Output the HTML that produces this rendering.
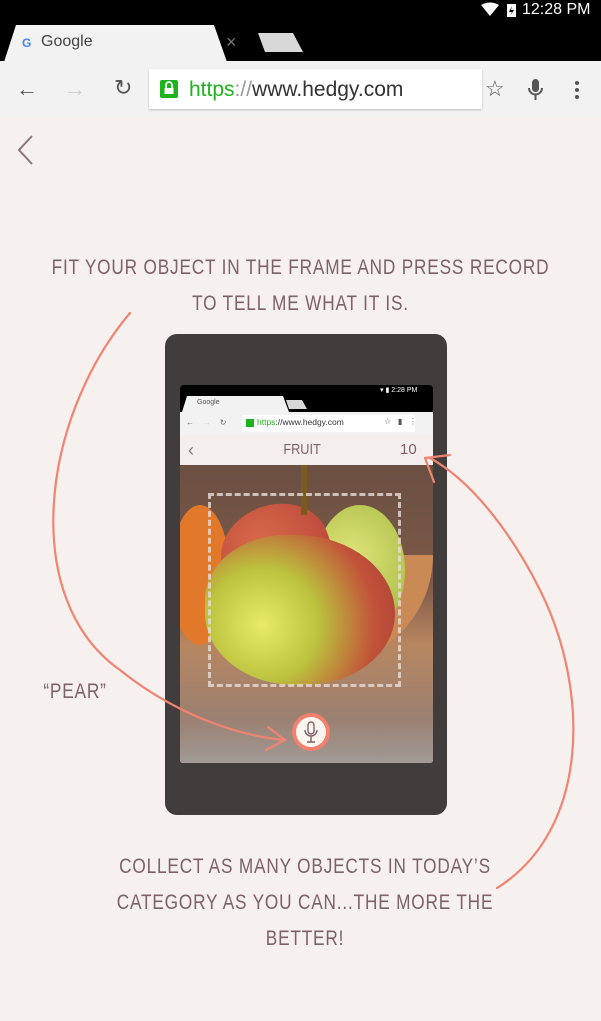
<!DOCTYPE html>
<html><head><meta charset="utf-8"><style>
body{margin:0;width:601px;height:1021px;background:#f6f0ef;font-family:"Liberation Sans",sans-serif;position:relative;overflow:hidden}
.abs{position:absolute}
.hand{font-family:"Liberation Sans",sans-serif;color:#7d6266;letter-spacing:1px;text-align:center;font-size:21px;line-height:36px;transform:scaleX(.82);}
</style></head><body>
<div class="abs" style="left:0;top:0;width:601px;height:62px;background:#000"></div>
<div class="abs" style="left:522px;top:0;color:#fff;font-size:16px;line-height:19px">12:28 PM</div>
<svg class="abs" style="left:480px;top:2px" width="40" height="16"><path d="M1 3 Q10 -2 19 3 L10 14Z" fill="#fff"/><rect x="27" y="2" width="9" height="13" fill="#fff"/><path d="M32 4 L29 10 L32 10 L30 14 L34 8 L31 8Z" fill="#000"/></svg>
<svg class="abs" style="left:0;top:25px" width="310" height="37"><path d="M4 37 L16 0 L214 0 L227 37Z" fill="#f2f2f2"/><path d="M258 8 L293 8 L303 27 L265 27Z" fill="#d8d8d8"/></svg>
<div class="abs" style="left:22px;top:36px;font-size:12px;font-weight:bold;color:#4285f4">G</div>
<div class="abs" style="left:41px;top:33px;font-size:16px;color:#444">Google</div>
<div class="abs" style="left:226px;top:32px;font-size:18px;color:#777">×</div>
<div class="abs" style="left:0;top:61px;width:601px;height:57px;background:#f2f2f2"></div>
<div class="abs" style="left:16px;top:76px;font-size:22px;color:#555">←</div>
<div class="abs" style="left:64px;top:76px;font-size:22px;color:#ccc">→</div>
<div class="abs" style="left:114px;top:75px;font-size:22px;color:#555">↻</div>
<div class="abs" style="left:149px;top:69px;width:333px;height:40px;background:#fff;box-shadow:0 1px 2px #bbb"></div>
<div class="abs" style="left:160px;top:80px;width:18px;height:18px;background:#1db31d;border-radius:2px"></div>
<svg class="abs" style="left:163px;top:81px" width="12" height="15"><path d="M3 7 V4 A3 3 0 0 1 9 4 V7" stroke="#fff" stroke-width="1.8" fill="none"/><rect x="1.5" y="7" width="9" height="6" fill="#fff"/></svg>
<div class="abs" style="left:189px;top:78px;font-size:21px;color:#333"><span style="color:#1db31d">https</span><span style="color:#999">://</span>www.hedgy.com</div>
<div class="abs" style="left:485px;top:76px;font-size:22px;color:#555">☆</div>
<svg class="abs" style="left:527px;top:78px" width="18" height="24"><rect x="5" y="1" width="7" height="13" rx="3.5" fill="#555"/><path d="M2 10 A6.5 6.5 0 0 0 15 10 M8.5 17 V22" stroke="#555" stroke-width="2" fill="none"/></svg>
<svg class="abs" style="left:574px;top:80px" width="6" height="20"><circle cx="3" cy="3" r="2" fill="#555"/><circle cx="3" cy="10" r="2" fill="#555"/><circle cx="3" cy="17" r="2" fill="#555"/></svg>
<svg class="abs" style="left:14px;top:134px" width="24" height="32"><path d="M18 2 L5 16 L18 30" stroke="#8a7579" stroke-width="2" fill="none"/></svg>
<div class="abs hand" style="left:-20px;top:250px;width:641px">FIT YOUR OBJECT IN THE FRAME AND PRESS RECORD<br>TO TELL ME WHAT IT IS.</div>
<div class="abs" style="left:165px;top:334px;width:282px;height:481px;background:#423d3d;border-radius:12px"></div>
<div class="abs" style="left:180px;top:385px;width:253px;height:378px;background:#f4eeed;overflow:hidden;border-radius:3px">
 <div class="abs" style="left:0;top:0;width:253px;height:27px;background:#000"></div>
 <div class="abs" style="left:200px;top:1px;color:#fff;font-size:7px">▾ ▮ 2:28 PM</div>
 <svg class="abs" style="left:0;top:11px" width="140" height="16"><path d="M2 16 L7 0 L103 0 L109 16Z" fill="#f2f2f2"/><path d="M106 4 L122 4 L127 13 L109 13Z" fill="#d8d8d8"/></svg>
 <div class="abs" style="left:17px;top:14px;font-size:7px;color:#555">Google</div>
 <div class="abs" style="left:0;top:27px;width:253px;height:23px;background:#f2f2f2"></div>
 <div class="abs" style="left:6px;top:33px;font-size:8px;color:#666">←&nbsp;&nbsp;&nbsp;&nbsp;<span style="color:#ccc">→</span>&nbsp;&nbsp;&nbsp;&nbsp;↻</div>
 <div class="abs" style="left:62px;top:30px;width:173px;height:17px;background:#fff"></div>
 <div class="abs" style="left:66px;top:34px;width:8px;height:8px;background:#1db31d"></div>
 <div class="abs" style="left:77px;top:32px;font-size:8.5px;color:#333"><b style="color:#1db31d;font-weight:normal">https</b>://www.hedgy.com</div>
 <div class="abs" style="left:204px;top:32px;font-size:8px;color:#555">☆&nbsp;&nbsp;&nbsp;▮&nbsp;&nbsp;&nbsp;⋮</div>
 <div class="abs" style="left:8px;top:55px;font-size:18px;color:#8a7579">‹</div>
 <div class="abs" style="left:100px;top:56px;font-size:15px;color:#7d6266;transform:scaleX(.85)">FRUIT</div>
 <div class="abs" style="left:220px;top:56px;font-size:15px;color:#7d6266">10</div>
 <div class="abs" style="left:0;top:80px;width:253px;height:298px;background:linear-gradient(180deg,#6a4f42 0%,#7e5a48 40%,#b88660 60%,#9b8071 85%,#a09a95 100%)"></div>
 <div class="abs" style="left:0;top:170px;width:253px;height:110px;border-radius:0 0 120px 120px;background:#c98a55"></div>
 <div class="abs" style="left:-10px;top:120px;width:60px;height:140px;border-radius:50%;background:#e1782a"></div>
 <div class="abs" style="left:135px;top:120px;width:90px;height:130px;border-radius:50%;background:radial-gradient(circle at 40% 40%,#e0e57a,#9bb23a)"></div>
 <div class="abs" style="left:40px;top:120px;width:110px;height:90px;border-radius:50% 50% 40% 40%;background:radial-gradient(circle at 40% 40%,#d96a4a,#b8443a);transform:rotate(-20deg)"></div>
 <div class="abs" style="left:25px;top:150px;width:190px;height:150px;border-radius:45% 55% 50% 50%;background:radial-gradient(circle at 30% 60%,#e7ea6a 0%,#bcc33e 35%,#c2533a 70%,#a33a35 100%)"></div>
 <div class="abs" style="left:121px;top:80px;width:6px;height:50px;background:#7a5a1e"></div>
 <div class="abs" style="left:28px;top:108px;width:193px;height:194px;border:3px dashed #e8ddd6;box-sizing:border-box;opacity:.8"></div>
</div>
<div class="abs" style="left:292px;top:713px;width:38px;height:38px;border-radius:50%;background:#f37f6d"></div>
<div class="abs" style="left:296px;top:717px;width:30px;height:30px;border-radius:50%;background:#fbf5f0"></div>
<svg class="abs" style="left:302px;top:720px" width="18" height="26"><rect x="6" y="2" width="6" height="12" rx="3" fill="none" stroke="#7d6266" stroke-width="1.4"/><path d="M3 10 A6 6 0 0 0 15 10 M9 16 V22 M5 22 H13" stroke="#7d6266" stroke-width="1.4" fill="none"/></svg>
<div class="abs hand" style="left:30px;top:674px;width:90px">“PEAR”</div>
<svg class="abs" style="left:0;top:0" width="601" height="1021" fill="none" stroke="#f08470" stroke-width="2.2" stroke-linecap="round">
<path d="M130 313 C40 420 20 600 120 670 C170 710 230 735 285 740"/>
<path d="M268 727 L285 740 L266 750"/>
<path d="M497 888 C590 830 590 690 540 590 C510 530 470 480 430 458"/>
<path d="M425 458 L450 455 M425 458 L434 482"/>
</svg>
<div class="abs hand" style="left:60px;top:849px;width:490px">COLLECT AS MANY OBJECTS IN TODAY’S<br>CATEGORY AS YOU CAN...THE MORE THE<br>BETTER!</div>
</body></html>
